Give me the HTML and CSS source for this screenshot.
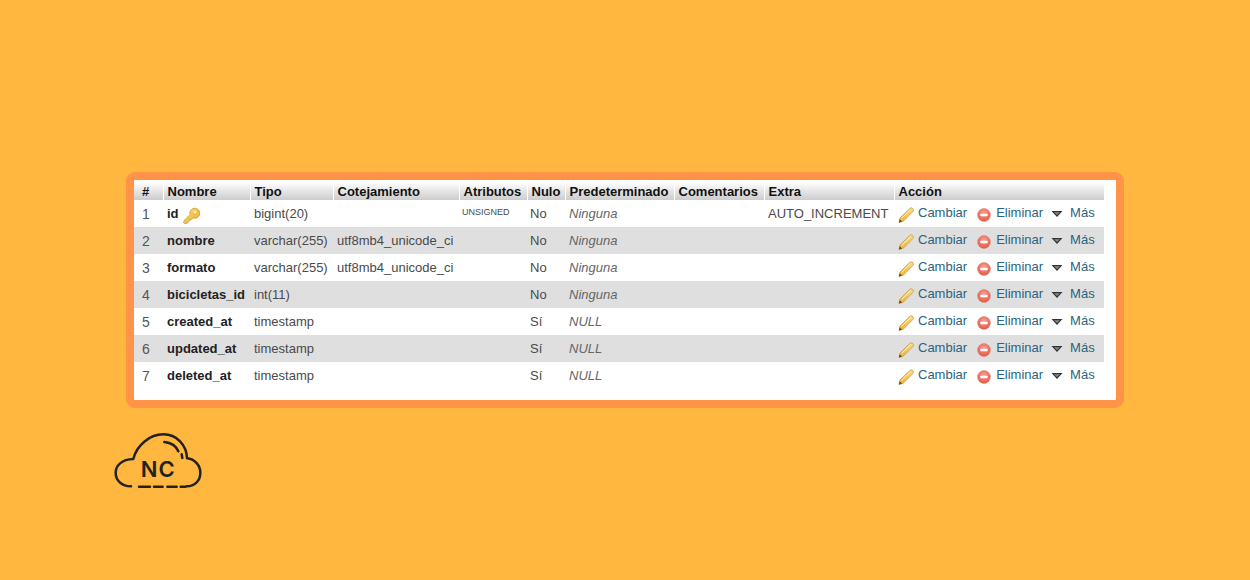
FILE: index.html
```html
<!DOCTYPE html>
<html lang="es">
<head>
<meta charset="utf-8">
<title>Estructura de tabla</title>
<link rel="stylesheet" href="styles.css">
</head>
<body>
<svg width="0" height="0" class="defs" aria-hidden="true">
  <defs>
    <linearGradient id="gk" x1="0" y1="0" x2="1" y2="1"><stop offset="0" stop-color="#fbe38a"/><stop offset="1" stop-color="#e8a820"/></linearGradient>
    <linearGradient id="gp" x1="1" y1="0" x2="0" y2="1"><stop offset="0" stop-color="#f7dc8a"/><stop offset="1" stop-color="#eeb030"/></linearGradient>
    <radialGradient id="gr" cx=".5" cy=".35" r=".7"><stop offset="0" stop-color="#f9a394"/><stop offset="1" stop-color="#e2503f"/></radialGradient>
    <symbol id="pencil" viewBox="0 0 16 16">
      <path d="M1 15.500 2 11 11.800 1.400c1-.9 2.200-.6 3 .2s1 2 .1 2.900L5.200 14.200Z" fill="url(#gp)" stroke="#c9993a" stroke-width=".8"/>
      <path d="M1 15.500 1.700 12.300 4 14.500Z" fill="#5b4324"/>
      <path d="M3.500 11.500 12.500 2.700" stroke="#fdf3c8" stroke-width="1" fill="none"/>
    </symbol>
    <symbol id="minus" viewBox="0 0 16 16">
      <circle cx="8" cy="8" r="7.300" fill="url(#gr)" stroke="#e0705f" stroke-width=".6"/>
      <rect x="3.800" y="6.700" width="8.400" height="2.600" rx=".8" fill="#fff"/>
    </symbol>
    <symbol id="down" viewBox="0 0 12 8">
      <path d="M.5 1h11L6 7Z" fill="#333"/>
      <path d="M3 2.200h6L6 5Z" fill="#888"/>
    </symbol>
    <symbol id="key" viewBox="0 0 18 18">
      <path d="M2 13.500 8 7.800a5 5 0 1 1 3.300 3.200L9.500 12.500 8 12.300 7.800 14 6 14.200 5.600 16 2.800 16.800 1.500 15.500Z" fill="url(#gk)" stroke="#cf9a26" stroke-width=".8"/>
      <circle cx="13" cy="5" r="1.300" fill="#fff5c8"/>
    </symbol>
  </defs>
</svg>
<main class="card">
  <table class="structure">
    <colgroup>
      <col class="c-num"><col class="c-name"><col class="c-type"><col class="c-coll"><col class="c-attr"><col class="c-null"><col class="c-def"><col class="c-com"><col class="c-extra"><col class="c-act">
    </colgroup>
    <thead>
      <tr><th class="hash">#</th><th>Nombre</th><th>Tipo</th><th>Cotejamiento</th><th>Atributos</th><th>Nulo</th><th>Predeterminado</th><th>Comentarios</th><th>Extra</th><th>Acción</th></tr>
    </thead>
    <tbody>
      <tr><td class="num">1</td><td class="name">id <svg class="i-key"><use href="#key"/></svg></td><td>bigint(20)</td><td></td><td class="attr">UNSIGNED</td><td class="nul">No</td><td class="def">Ninguna</td><td></td><td>AUTO_INCREMENT</td><td><div class="acts"><a><svg class="i-pencil"><use href="#pencil"/></svg>Cambiar</a><a><svg class="i-minus"><use href="#minus"/></svg>Eliminar</a><a><svg class="i-down"><use href="#down"/></svg>Más</a></div></td></tr>
      <tr><td class="num">2</td><td class="name">nombre</td><td>varchar(255)</td><td>utf8mb4_unicode_ci</td><td></td><td class="nul">No</td><td class="def">Ninguna</td><td></td><td></td><td><div class="acts"><a><svg class="i-pencil"><use href="#pencil"/></svg>Cambiar</a><a><svg class="i-minus"><use href="#minus"/></svg>Eliminar</a><a><svg class="i-down"><use href="#down"/></svg>Más</a></div></td></tr>
      <tr><td class="num">3</td><td class="name">formato</td><td>varchar(255)</td><td>utf8mb4_unicode_ci</td><td></td><td class="nul">No</td><td class="def">Ninguna</td><td></td><td></td><td><div class="acts"><a><svg class="i-pencil"><use href="#pencil"/></svg>Cambiar</a><a><svg class="i-minus"><use href="#minus"/></svg>Eliminar</a><a><svg class="i-down"><use href="#down"/></svg>Más</a></div></td></tr>
      <tr><td class="num">4</td><td class="name">bicicletas_id</td><td>int(11)</td><td></td><td></td><td class="nul">No</td><td class="def">Ninguna</td><td></td><td></td><td><div class="acts"><a><svg class="i-pencil"><use href="#pencil"/></svg>Cambiar</a><a><svg class="i-minus"><use href="#minus"/></svg>Eliminar</a><a><svg class="i-down"><use href="#down"/></svg>Más</a></div></td></tr>
      <tr><td class="num">5</td><td class="name">created_at</td><td>timestamp</td><td></td><td></td><td class="nul">Sí</td><td class="def">NULL</td><td></td><td></td><td><div class="acts"><a><svg class="i-pencil"><use href="#pencil"/></svg>Cambiar</a><a><svg class="i-minus"><use href="#minus"/></svg>Eliminar</a><a><svg class="i-down"><use href="#down"/></svg>Más</a></div></td></tr>
      <tr><td class="num">6</td><td class="name">updated_at</td><td>timestamp</td><td></td><td></td><td class="nul">Sí</td><td class="def">NULL</td><td></td><td></td><td><div class="acts"><a><svg class="i-pencil"><use href="#pencil"/></svg>Cambiar</a><a><svg class="i-minus"><use href="#minus"/></svg>Eliminar</a><a><svg class="i-down"><use href="#down"/></svg>Más</a></div></td></tr>
      <tr><td class="num">7</td><td class="name">deleted_at</td><td>timestamp</td><td></td><td></td><td class="nul">Sí</td><td class="def">NULL</td><td></td><td></td><td><div class="acts"><a><svg class="i-pencil"><use href="#pencil"/></svg>Cambiar</a><a><svg class="i-minus"><use href="#minus"/></svg>Eliminar</a><a><svg class="i-down"><use href="#down"/></svg>Más</a></div></td></tr>
    </tbody>
  </table>
</main>
<svg class="logo" viewBox="0 0 330 210" role="img" aria-label="NC">
  <g fill="none" stroke="#222" stroke-width="7.500" stroke-linecap="round" stroke-linejoin="round">
    <path d="M78 184C50 184 32 166 32 143C32 122 50 103 85 102C95 60 135 28 175 28C215 28 245 60 246 100C270 102 286 122 286 143C286 168 268 184 245 184"/>
    <path d="M178 51c20 2 36 13 42 28"/>
    <path d="M230 88l2 11"/>
    <path d="M102 185h33M147 185h26M187 185h28M227 185h14"/>
  </g>
  <text class="logo-text" x="160" y="155" text-anchor="middle">NC</text>
</svg>
</body>
</html>
```
FILE: styles.css
```css
html, body {
  margin: 0;
  padding: 0;
}
body {
  width: 1250px;
  height: 580px;
  overflow: hidden;
  background: #ffb73f;
  font-family: "Liberation Sans", Arial, sans-serif;
  display: flex;
  flex-direction: column;
  align-items: flex-start;
}
.defs {
  position: absolute;
}
.card {
  box-sizing: border-box;
  width: 998px;
  height: 236px;
  margin: 172px 0 0 126px;
  padding: 2px 12px 0 0;
  background: #fff;
  border: 8px solid #ff9347;
  border-radius: 9px;
}
.structure {
  width: 970px;
  table-layout: fixed;
  border-collapse: collapse;
  font-size: 13px;
  color: #4a4a4a;
}
.c-num { width: 29px; }
.c-name { width: 87px; }
.c-type { width: 83px; }
.c-coll { width: 126px; }
.c-attr { width: 68px; }
.c-null { width: 38px; }
.c-def { width: 109px; }
.c-com { width: 90px; }
.c-extra { width: 130px; }
.c-act { width: 210px; }
th {
  height: 18px;
  padding: 0 0 0 4px;
  text-align: left;
  font-size: 13px;
  font-weight: bold;
  color: #111;
  background: linear-gradient(#fff, #ccc);
  border-left: 1px solid #fff;
  white-space: nowrap;
  overflow: hidden;
}
th.hash {
  border-left: 0;
  padding-left: 8px;
}
td {
  height: 27px;
  padding: 0 0 0 4px;
  white-space: nowrap;
  overflow: hidden;
}
tbody tr:nth-child(even) td {
  background: #dfdfdf;
}
td.num {
  padding-left: 8px;
  color: #555;
  font-size: 14px;
}
td.name {
  font-weight: bold;
  color: #222;
}
td.attr {
  font-size: 9px;
  line-height: 24px;
  vertical-align: top;
  padding-left: 3px;
}
td.nul {
  padding-left: 3px;
}
td.def {
  font-style: italic;
  color: #666;
}
.i-key {
  width: 18px;
  height: 18px;
  margin: -6px 0;
  vertical-align: -1px;
}
.acts {
  display: flex;
  align-items: center;
  height: 27px;
  color: #2a6480;
}
.acts a {
  display: flex;
  align-items: center;
  margin-right: 8px;
  position: relative;
  top: -1px;
}
.acts a:first-child {
  margin-right: 10px;
}
.i-pencil {
  width: 16px;
  height: 16px;
  margin-right: 4px;
  position: relative;
  top: 2px;
}
.i-minus {
  width: 14px;
  height: 14px;
  margin-right: 5px;
  position: relative;
  top: 2px;
}
.i-down {
  width: 12px;
  height: 8px;
  margin-right: 7px;
  position: relative;
  top: 1px;
}
.logo {
  width: 110px;
  height: 70px;
  margin: 17px 0 0 105px;
}
.logo-text {
  font-family: Inter, "Liberation Sans", sans-serif;
  font-weight: 600;
  font-size: 66px;
  letter-spacing: 3px;
  fill: #222;
}
```
